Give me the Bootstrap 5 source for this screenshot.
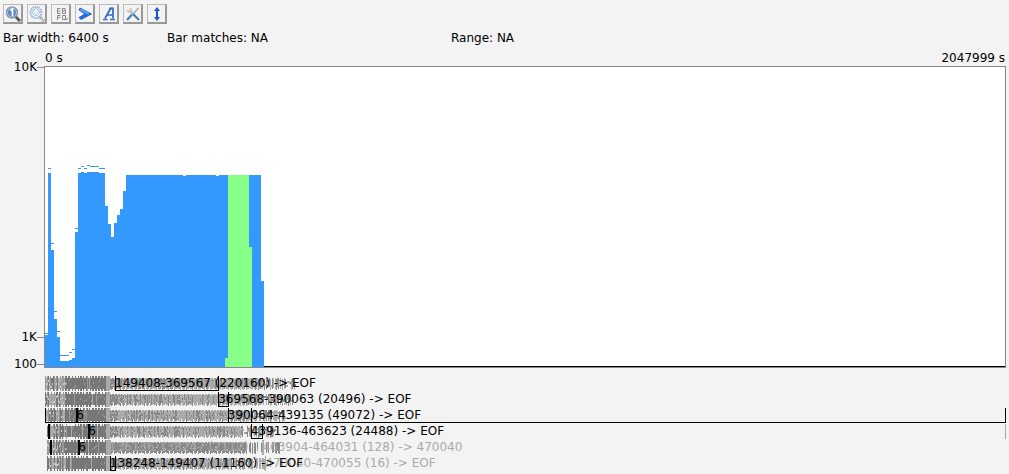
<!DOCTYPE html>
<html lang="en">
<head>
<meta charset="utf-8">
<meta name="viewport" content="width=device-width, initial-scale=1">
<title>Timeline</title>
<link href="https://cdn.jsdelivr.net/npm/bootstrap@5.3.0/dist/css/bootstrap.min.css" rel="stylesheet">
<style>
body{background:#f3f3f3;color:#000;font:12px/16px "DejaVu Sans",sans-serif;overflow-x:hidden}
.tool{width:20px;height:20px;padding:1px;line-height:0;background:#f3f3f3;border:1px solid #bbb;border-right:2px solid #999;border-bottom:2px solid #999;border-radius:0}
.tool svg{width:16px;height:16px;margin:0}
.tools{padding:4px 3px 0}
.stats{padding:6px 3px 0}
.stat-a{flex:0 0 164px}.stat-b{flex:0 0 284px}
.timeline{display:grid;grid-template-columns:44px minmax(0,1fr);padding:4px 3px 0 0}
.ends{grid-column:2;padding:0 1px}
.scale{display:grid;grid-template-rows:270px 27px 16px;text-align:right;margin:-7px 0 -4px}
.tick{display:flex;justify-content:end;align-items:center;height:16px}
.tick::after{content:"";width:7px;height:1px;background:#888}
.plot{background:#fff;border:1px solid #888}
.plot svg,.lane{display:block;width:100%}
.plot svg{height:300px}
.lanes{grid-column:2;padding:8px 1px 0}
.lane{height:16px;overflow:visible}
.lane text{font-size:12px}
</style>
<script src="https://cdn.jsdelivr.net/npm/bootstrap@5.3.0/dist/js/bootstrap.bundle.min.js"></script>
</head>
<body>
<div class="tools d-flex gap-1" role="toolbar" aria-label="Timeline tools">
<button class="tool" aria-label="Zoom to 1"><svg viewBox="0 0 16 16"><path d="M10 10l5 5" stroke="#555" stroke-width="3"/><circle cx="7" cy="6.500" r="5.500" fill="#c4dbf2" stroke="#8496a8" stroke-width="1.500"/><circle cx="7" cy="6.500" r="4" fill="#5888c5"/><path d="M5.500 4.500L7.500 3v7" fill="none" stroke="#fff" stroke-width="1.800"/></svg></button>
<button class="tool" aria-label="Zoom selection"><svg viewBox="0 0 16 16"><path d="M10 10l5 5" stroke="#888" stroke-width="3" stroke-dasharray="1 1"/><circle cx="7" cy="6.500" r="5.500" fill="#eef4fa" stroke="#8ba0b5" stroke-width="2" stroke-dasharray="1 1"/><path d="M4 5l3-3 4 4-4 4-4-4" fill="none" stroke="#90b7df" stroke-width="1.500" stroke-dasharray="1 1"/></svg></button>
<button class="tool" aria-label="Frequency"><svg viewBox="0 0 16 16" fill="none" stroke="#888" stroke-width="1"><path d="M7.500 2.500h-3v5h3M4.500 5h3M9.500 2.500v5h3V5h-3M9.500 2.500h2.500V5M4.500 14V9.500h3M4.500 11.500h3M9.500 9.500h3v4h-3zM12 13l1 1 2-2"/></svg></button>
<button class="tool" aria-label="Run"><svg viewBox="0 0 16 16"><path d="M3 2L14.500 8 4 13.500 2 11.500 8 8 2 4z" fill="#1a70ee" stroke="#1040a8" stroke-width=".7"/><path d="M3.500 3.500L12 8" stroke="#5ab0ff" stroke-width="1.500"/></svg></button>
<button class="tool" aria-label="Font"><svg viewBox="0 0 16 16" fill="none" stroke="#3370c9"><path d="M4 12.500L9.500 2.500h2.500v10" stroke-width="1.800"/><path d="M6 9h5M2 13.500h4.500M9 13.500h5M8 2.500h4" stroke-width="1.400"/></svg></button>
<button class="tool" aria-label="Settings"><svg viewBox="0 0 16 16" fill="none"><path d="M13.500 2L8 8" stroke="#aaa" stroke-width="1.500"/><path d="M7.500 8L2 14" stroke="#4386bd" stroke-width="2.300"/><path d="M4 4l5 5" stroke="#bbb" stroke-width="2.500"/><path d="M8 8l6 6" stroke="#397eb4" stroke-width="2"/><path d="M2 4l2 2 2-1V2" stroke="#ccc" stroke-width="2"/></svg></button>
<button class="tool" aria-label="Fit height"><svg viewBox="0 0 16 16"><path d="M8 1l3 4H9v6h2l-3 4-3-4h2V5H5z" fill="#1856d6"/></svg></button>
</div>
<div class="stats d-flex"><div class="stat-a">Bar width: 6400 s</div><div class="stat-b">Bar matches: NA</div><div>Range: NA</div></div>
<main class="timeline">
<div class="ends d-flex justify-content-between"><span>0 s</span><span>2047999 s</span></div>
<div class="scale"><div class="tick">10K</div><div class="tick">1K</div><div class="tick">100</div></div>
<div class="plot"><svg id="bars" viewBox="0 0 320 300" preserveAspectRatio="none" shape-rendering="crispEdges" role="img" aria-label="Matches per bar"></svg></div>
<div class="lanes" id="lanes"></div>
</main>
<script>
// Each run: number of bars, bar height, height of the peak marker
const runs=[[1,32,34],[1,194,199],[1,117,124],[1,48,56],[1,30,36],[3,6,12],[1,7,15],[1,9,18],[1,135,139],
[1,194,199],[1,195,201],[1,194,199],[1,195,202],[3,195,201],[2,194,199],[1,161],[1,143],[1,130],[1,144],[1,152],[1,158],[1,176],
[19,192],[1,191],[10,192],[1,191],[14,192],[1,86]];
const rect=(x,y,w,h,f)=>`<rect x="${x}" y="${y}" width="${w}" height="${h}" fill="${f}"/>`;
let at=0,art='';
for(const [n,h,peak] of runs){
  art+=rect(at,300-h,n,h,'#3399ff');
  if(peak)art+=rect(at,300-peak,n,1,'#3399ff');
  at+=n;
}
// Selected bars
art+=rect(61,108,7,192,'#88ff88')+rect(60,291,1,9,'#88ff88')+rect(68,180,1,120,'#88ff88')+rect(at,299,320-at,1,'#000');
document.getElementById('bars').innerHTML=art;

// Segments of each lane: start, end, colour, label
const total=2048000, pct=v=>(v/total*100)+'%';
const lanes=[
 [[149408,369567,'#000','149408-369567 (220160) -> EOF']],
 [[369568,390063,'#000','369568-390063 (20496) -> EOF']],
 [[0,2047999,'#000',''],[66500,66500,'#000','6'],[390064,439135,'#000','390064-439135 (49072) -> EOF']],
 [[7000,7000,'#000',''],[92200,92200,'#000','6'],[439136,463623,'#000','439136-463623 (24488) -> EOF'],[2047999,2047999,'#aaa','']],
 [[11000,11000,'#000',''],[71000,71000,'#000','6'],[136136,136136,'#aaa','136136-138247 (2112)'],[463904,464031,'#aaa','463904-464031 (128) -> 470040']],
 [[470040,470055,'#aaa','470040-470055 (16) -> EOF'],[138248,149407,'#000','138248-149407 (11160) -> EOF']]
];
let seed=7;const rnd=()=>(seed=(seed*16807)%2147483647)/2147483647;
// Dense short segments, whose outlines and captions merge into a band
function band(i){
  let o='';
  const start=i>2?2:0;
  o+=rect(start,2,65-start,11,'#888');
  for(let x=start;x<62;x++){
    const dark=x>20?rnd()>.08:rnd()>.6;
    o+=rect(x,2,1,11,dark?'#777':'#aaa');
    if(x%3!==1&&rnd()>.2)o+=rect(x,0,1,15,dark?'#777':'#999');
    if(rnd()>(x>20?.8:.45))o+=rect(x,3+Math.floor(rnd()*8),1,2,x>20?'#999':'#ccc');
  }
  o+=rect(61,0,4,15,'#aaa');
  const end=[250,248,240,230,236,220][i];
  for(let x=65;x<end;x++){
    const fade=x>end-35;
    if(!fade||rnd()>.35)o+=rect(x,x%3?2:3,1,x%4?11:9,rnd()>.35&&x>72?(i===4?'#888':'#aaa'):'#888');
    if(i!==4&&rnd()>.3)o+=rect(x,4+Math.floor(rnd()*6),2,2,rnd()>.45?'#aaa':'#858585');
    if(rnd()>.75)o+=rect(x,3+Math.floor(rnd()*8),1,1,'#ccc');
  }
  return o;
}
document.getElementById('lanes').innerHTML=lanes.map((l,i)=>{
  let o='<g shape-rendering="crispEdges">'+band(i)+'</g>';
  for(const [a,b,c,t] of l){
    const w=a===b&&a<total/2?2:1;
    o+=`<g shape-rendering="crispEdges"><rect x="${pct(a)}" width="${w}" height="15" fill="${c}"/>`;
    if(b>a)o+=`<rect x="${pct(a)}" y="14" width="${pct(b-a)}" height="1" fill="${c}"/><rect x="${pct(b)}" width="1" height="15" fill="${c}"/>`;
    o+='</g>';
    if(t)o+=`<text x="${pct(a)}" y="11" fill="${c}">${t.replace('>','&gt;')}</text>`;
  }
  return `<svg class="lane">${o}</svg>`;
}).join('');
</script>
</body>
</html>
